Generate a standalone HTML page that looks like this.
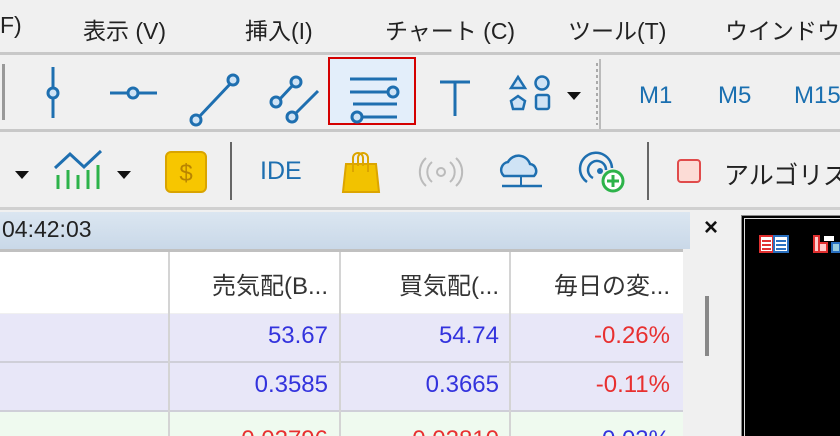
<!DOCTYPE html><html><head><meta charset="utf-8"><style>
html,body{margin:0;width:840px;height:436px;overflow:hidden}
body{background:#f0f0f0;font-family:"Liberation Sans","Noto Sans CJK JP",sans-serif;position:relative}
.a{position:absolute;white-space:nowrap}
.menu{font-size:23px;color:#222;top:12px}
.hl{position:absolute;left:0;width:840px;height:3px;background:#c8c8c8}
.tb{color:#1a6fb0;font-size:24px}
.num{position:absolute;font-size:24px;text-align:right}
</style></head><body>
<div class="a menu" style="left:0">F)</div>
<div class="a menu" style="left:83px">表示 (V)</div>
<div class="a menu" style="left:245px">挿入(I)</div>
<div class="a menu" style="left:385px">チャート (C)</div>
<div class="a menu" style="left:568px">ツール(T)</div>
<div class="a menu" style="left:725px">ウインドウ</div>
<div class="hl" style="top:52px"></div>
<div class="hl" style="top:129px"></div>
<div class="hl" style="top:207px;background:#d0d0d0"></div>
<div class="a" style="left:2px;top:64px;width:3px;height:56px;background:#999"></div>
<div class="a" style="left:328px;top:57px;width:88px;height:68px;border:2px solid #d40000;box-sizing:border-box;background:#e3eefa"></div>
<svg class="a" style="left:0;top:55px" width="840" height="75" fill="none" stroke="#1e6fb0" stroke-width="3">
<line x1="53" y1="12" x2="53" y2="63"/><circle cx="53" cy="38" r="5" fill="#cfe3f5"/>
<line x1="110" y1="38" x2="157" y2="38"/><circle cx="133" cy="38" r="5" fill="#cfe3f5"/>
<line x1="198" y1="63" x2="232" y2="27"/><circle cx="196" cy="65" r="5" fill="#cfe3f5"/><circle cx="233" cy="25" r="5" fill="#cfe3f5"/>
<line x1="279" y1="45" x2="293" y2="30"/><circle cx="276" cy="47" r="5" fill="#cfe3f5"/><circle cx="296" cy="27" r="5" fill="#cfe3f5"/>
<line x1="296" y1="58" x2="318" y2="36"/><circle cx="292" cy="62" r="5" fill="#cfe3f5"/>
<line x1="350" y1="24" x2="397" y2="24"/><line x1="350" y1="37" x2="387" y2="37"/><circle cx="393" cy="37" r="5" fill="#cfe3f5"/><line x1="353" y1="49" x2="397" y2="49"/><line x1="363" y1="62" x2="397" y2="62"/><circle cx="357" cy="62" r="5" fill="#cfe3f5"/>
<line x1="440" y1="27" x2="470" y2="27"/><line x1="455" y1="27" x2="455" y2="61"/>
<path d="M511 33 l7 -11 l7 11z" fill="#cfe3f5" stroke-width="2.5"/><circle cx="542" cy="28" r="6.5" fill="#cfe3f5" stroke-width="2.5"/>
<path d="M511 46 l7 -5 l7 5 l-2 8 h-10z" fill="#cfe3f5" stroke-width="2.5"/><rect x="536" y="40" width="13" height="14" rx="2" fill="#cfe3f5" stroke-width="2.5"/>
<path d="M567 37 h14 l-7 8z" fill="#111" stroke="none"/>
<line x1="597" y1="8" x2="597" y2="70" stroke="#aaa" stroke-dasharray="3 3" stroke-width="2"/>
<line x1="600" y1="4" x2="600" y2="74" stroke="#bbb" stroke-width="2"/>
</svg>
<div class="a tb" style="left:639px;top:82px">M1</div>
<div class="a tb" style="left:718px;top:82px">M5</div>
<div class="a tb" style="left:794px;top:82px">M15</div>
<svg class="a" style="left:0;top:132px" width="840" height="75" fill="none" stroke-width="3">
<path d="M15 39 h14 l-7 8z" fill="#111"/>
<path d="M55 36 l15 -14 l14 13 l17 -16" stroke="#1e6fb0"/>
<g stroke="#2db34a"><line x1="58" y1="43" x2="58" y2="57"/><line x1="68" y1="38" x2="68" y2="57"/><line x1="78" y1="43" x2="78" y2="57"/><line x1="88" y1="38" x2="88" y2="57"/><line x1="98" y1="33" x2="98" y2="57"/></g>
<path d="M117 39 h14 l-7 8z" fill="#111"/>
<rect x="166" y="20" width="40" height="40" rx="5" fill="#f7c600" stroke="#d9a400" stroke-width="2"/>
<text x="186" y="49" font-size="24" fill="#b88400" stroke="none" text-anchor="middle" font-family="Liberation Sans">$</text>
<line x1="231" y1="10" x2="231" y2="68" stroke="#666" stroke-width="2"/>
<path d="M346 32 h30 l3 28 h-36z" fill="#f2c200" stroke="#dca500" stroke-width="2"/><path d="M353 40 v-14 a5 5 0 0 1 10 0 v8 M358 34 v-8 a5 5 0 0 1 10 0 v14" stroke="#dca500" stroke-width="2"/>
<circle cx="441" cy="40" r="4" stroke="#bbb" stroke-width="2"/><path d="M432 30 a13 13 0 0 0 0 20 M450 30 a13 13 0 0 1 0 20 M426 26 a19 19 0 0 0 0 28 M456 26 a19 19 0 0 1 0 28" stroke="#bbb" stroke-width="2"/>
<path d="M504 44 a8 8 0 0 1 4 -14 a12 12 0 0 1 22 2 a7 7 0 0 1 4 12z" fill="#cfe3f5" stroke="#1e6fb0" stroke-width="2.5"/><line x1="521" y1="44" x2="521" y2="54" stroke="#1e6fb0" stroke-width="2"/><line x1="502" y1="54" x2="542" y2="54" stroke="#1e6fb0" stroke-width="2.5"/>
<path d="M587 50 a16 16 0 1 1 25 -14 M593 46 a9 9 0 1 1 13 -8" stroke="#1e6fb0" stroke-width="2.5"/><circle cx="600" cy="39" r="3" fill="#1e6fb0" stroke="none"/>
<circle cx="613" cy="49" r="10" fill="#fff" stroke="#2db34a" stroke-width="3"/><path d="M607 49 h12 M613 43 v12" stroke="#2db34a" stroke-width="3"/>
<line x1="648" y1="10" x2="648" y2="68" stroke="#666" stroke-width="2"/>
<rect x="678" y="28" width="22" height="22" rx="3" fill="#fcdcd6" stroke="#e04b4b" stroke-width="2"/>
</svg>
<div class="a" style="left:260px;top:157px;font-size:25px;color:#1e6fb0">IDE</div>
<div class="a" style="left:724px;top:156px;font-size:25px;color:#222">アルゴリズ</div>
<div class="a" style="left:0;top:212px;width:690px;height:37px;background:linear-gradient(#dbe6f1,#c9d8e8)"></div>
<div class="a" style="left:2px;top:216px;font-size:23px;color:#222">04:42:03</div>
<div class="a" style="left:704px;top:214px;font-size:24px;font-weight:bold;color:#111">×</div>
<div class="a" style="left:0;top:249px;width:683px;height:3px;background:#c0c0c0"></div>
<div class="a" style="left:0;top:252px;width:683px;height:61px;background:#fff"></div>
<div class="a" style="left:0;top:314px;width:683px;height:47px;background:#e8e7f8"></div>
<div class="a" style="left:0;top:363px;width:683px;height:47px;background:#e8e7f8"></div>
<div class="a" style="left:0;top:412px;width:683px;height:30px;background:#effaef"></div>
<div class="a" style="left:0;top:361px;width:683px;height:2px;background:#cfcfd8"></div>
<div class="a" style="left:0;top:410px;width:683px;height:2px;background:#cfcfd8"></div>
<div class="a" style="left:168px;top:252px;width:2px;height:184px;background:#d4d4d4"></div>
<div class="a" style="left:339px;top:252px;width:2px;height:184px;background:#d4d4d4"></div>
<div class="a" style="left:509px;top:252px;width:2px;height:184px;background:#d4d4d4"></div>
<div class="a" style="left:705px;top:296px;width:4px;height:60px;background:#888"></div>
<div class="num" style="right:512px;top:266px;color:#333">売気配(B...</div>
<div class="num" style="right:341px;top:266px;color:#333">買気配(...</div>
<div class="num" style="right:170px;top:266px;color:#333">毎日の変...</div>
<div class="num" style="right:512px;top:322px;color:#3333dd">53.67</div>
<div class="num" style="right:341px;top:322px;color:#3333dd">54.74</div>
<div class="num" style="right:170px;top:322px;color:#e83030">-0.26%</div>
<div class="num" style="right:512px;top:371px;color:#3333dd">0.3585</div>
<div class="num" style="right:341px;top:371px;color:#3333dd">0.3665</div>
<div class="num" style="right:170px;top:371px;color:#e83030">-0.11%</div>
<div class="num" style="right:512px;top:426px;color:#e83030">0.02796</div>
<div class="num" style="right:341px;top:426px;color:#e83030">0.02810</div>
<div class="num" style="right:170px;top:426px;color:#3333dd">0.03%</div>
<div class="a" style="left:741px;top:215px;width:99px;height:221px;background:#000;border-left:1px solid #888;border-top:1px solid #888"></div>
<div class="a" style="left:744px;top:218px;width:96px;height:218px;border-left:1px solid #ddd;border-top:1px solid #ddd"></div>
<svg class="a" style="left:758px;top:234px" width="82" height="28"><rect x="2" y="2" width="13" height="16" fill="#fff" stroke="#e03030" stroke-width="2"/><rect x="16" y="2" width="14" height="16" fill="#fff" stroke="#2a70c0" stroke-width="2"/><g stroke="#e03030" stroke-width="2"><line x1="4" y1="7" x2="13" y2="7"/><line x1="4" y1="11" x2="13" y2="11"/><line x1="4" y1="15" x2="13" y2="15"/></g><g stroke="#2a70c0" stroke-width="2"><line x1="18" y1="7" x2="28" y2="7"/><line x1="18" y1="11" x2="28" y2="11"/><line x1="18" y1="15" x2="28" y2="15"/></g><rect x="56" y="2" width="5" height="16" fill="#fcc" stroke="#e03030" stroke-width="2"/><rect x="61" y="9" width="8" height="9" fill="#fcc" stroke="#e03030" stroke-width="2"/><rect x="66" y="2" width="10" height="5" fill="#fff"/><rect x="74" y="9" width="8" height="9" fill="#9cd" stroke="#2a70c0" stroke-width="2"/></svg>
</body></html>
